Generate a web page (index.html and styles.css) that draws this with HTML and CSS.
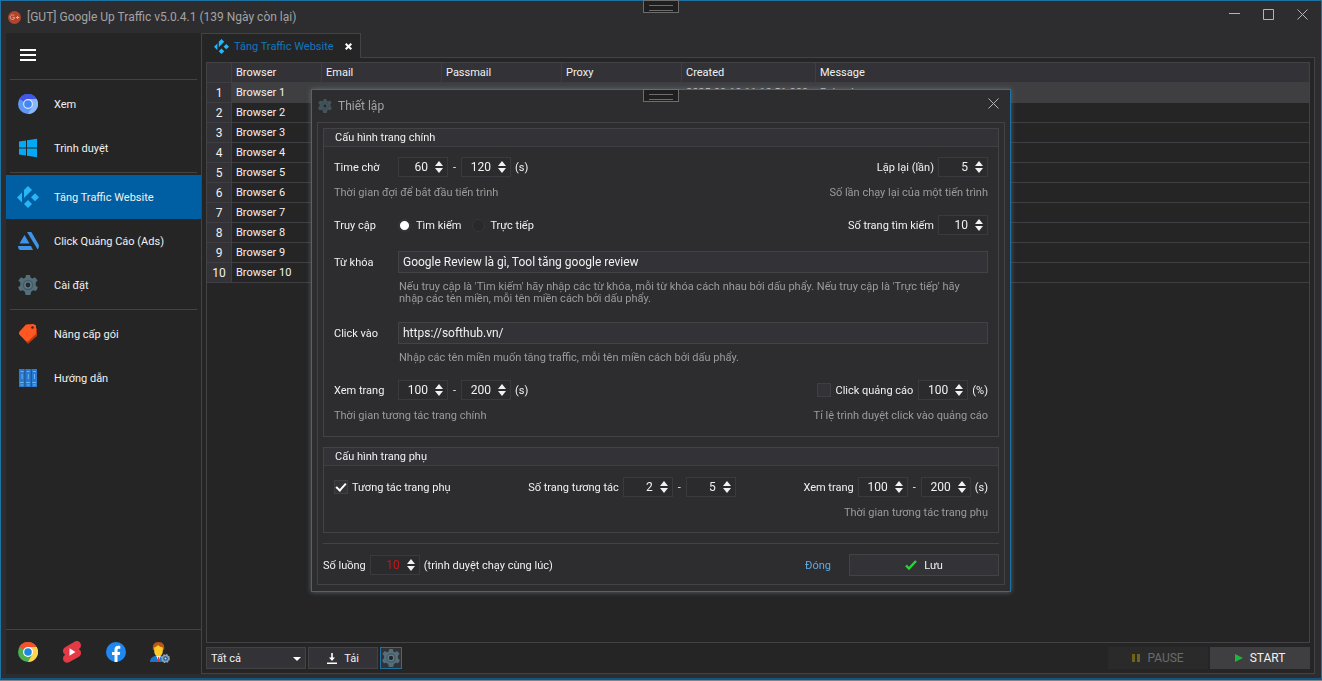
FILE: index.html
```html
<!DOCTYPE html>
<html lang="vi">
<head>
<meta charset="utf-8">
<title>[GUT] Google Up Traffic</title>
<link rel="stylesheet" href="styles.css">
</head>
<body>
<svg class="defs" aria-hidden="true">
  <defs>
    <symbol id="gear" viewBox="0 0 20 20">
      <path fill="#546e7a" d="M8 0h4l.6 2.700 1.900.9 2.500-1.300 2.600 3.200-1.900 2v2.900l2.200 2-1.900 3.500-2.900-.6-1.900 1.400L12.400 20H7.600l-.8-3.300-1.900-1.400-2.900.6L.1 12.400l2.200-2V7.500l-1.900-2L3 2.300l2.500 1.300 1.900-.9z"/>
      <circle cx="10" cy="10" r="5.200" fill="#455a64"/>
      <circle cx="10" cy="10" r="3.800" fill="#607d8b"/>
      <circle cx="10" cy="10" r="2.400" fill="#26292b"/>
    </symbol>
    <symbol id="kodi" viewBox="0 0 22 22">
      <path fill="#29b6f6" d="M11 0l4 4-8 8V4zM5 6.500v10L0 11.500zM18 7.200l4 4-4 4-4-4zM11 14l4 4-4 4-4-4z"/>
    </symbol>
    <symbol id="updown" viewBox="0 0 8 12">
      <path fill="#f1f1f1" d="M0 5l4-5 4 5zM0 7h8l-4 5z"/>
    </symbol>
  </defs>
</svg>

<div class="window">
  <div class="grip" aria-hidden="true"></div>
  <header class="titlebar">
    <svg class="app-icon" viewBox="0 0 13 13"><circle cx="6.500" cy="6.500" r="6.500" fill="#b5432a"/><path d="M6.200 4.700A2.300 2.300 0 1 0 6.700 6.700H4.600M8 6.500h3.200M9.600 4.900v3.200" fill="none" stroke="#d9b0a6" stroke-width="1"/></svg>
    <h1 class="title">[GUT] Google Up Traffic v5.0.4.1 (139 Ngày còn lại)</h1>
    <div class="win-buttons">
      <button class="win-button" aria-label="Minimize"><svg viewBox="0 0 11 11"><path d="M0 4.500h11"/></svg></button>
      <button class="win-button" aria-label="Maximize"><svg viewBox="0 0 11 11"><path d="M.5.5h10v10H.5z"/></svg></button>
      <button class="win-button" aria-label="Close"><svg viewBox="0 0 11 11"><path d="M.5.5l10 10M10.500.5l-10 10"/></svg></button>
    </div>
  </header>

  <div class="workspace">
    <nav class="sidebar">
      <button class="menu-button" aria-label="Menu"><svg viewBox="0 0 16 12"><path fill="#fff" d="M0 0h16v2H0zM0 5h16v2H0zM0 10h16v2H0z"/></svg></button>
      <hr class="nav-line">
      <a class="nav-item" href="#">
        <svg class="nav-icon" viewBox="0 0 20 20"><circle cx="10" cy="10" r="10" fill="#5e97f6"/><path d="M10 10L1.300 5A10 10 0 0 1 18.700 5z" fill="#4257e8"/><path d="M10 10l4.300 2.500L10 20A10 10 0 0 0 18.700 5H10z" fill="#8ab8fb"/><circle cx="10" cy="10" r="4.900" fill="#dce9fd"/><circle cx="10" cy="10" r="3.800" fill="#4285f4"/></svg>
        Xem</a>
      <a class="nav-item" href="#">
        <svg class="nav-icon" viewBox="0 0 20 20"><path fill="#03a9f4" d="M1 3.500l7-1v7H1zM9 2.300l10-1.500v8.700H9zM1 10.500h7v7l-7-1zM9 10.500h10v8.700L9 17.700z"/></svg>
        Trình duyệt</a>
      <hr class="nav-line">
      <a class="nav-item active" href="#">
        <svg class="nav-icon wide"><use href="#kodi"/></svg>
        Tăng Traffic Website</a>
      <a class="nav-item" href="#">
        <svg class="nav-icon wide" viewBox="0 0 22 20"><path fill="#3d94e8" d="M7.500 4l5 8.500h-10zM1 15h13l2 4H3.300c-1.300 0-2.300-2-2.300-4zM10 1h3.500c.8 0 1.200.5 1.600 1.200l6.500 11.300c.8 1.600.2 3.300-.9 5z"/></svg>
        Click Quảng Cáo (Ads)</a>
      <a class="nav-item" href="#">
        <svg class="nav-icon"><use href="#gear"/></svg>
        Cài đặt</a>
      <hr class="nav-line">
      <a class="nav-item" href="#">
        <svg class="nav-icon" viewBox="0 0 20 20"><path fill="#bf360c" d="M1 10l9 10 9-8V5L17 2z"/><path fill="#ff5722" d="M8 .5L15.500 0 18 1.500V10l-7.500 7c-1 .8-2 .6-3-.5L1.500 10.500c-.8-1-.6-2 .1-3z"/><circle cx="14.500" cy="3.500" r="1.300" fill="#3e2723"/></svg>
        Nâng cấp gói</a>
      <a class="nav-item" href="#">
        <svg class="nav-icon" viewBox="0 0 20 20"><path fill="#2979d0" d="M1 1h5.700v18H1zM7.200 1h5.700v18H7.200zM13.400 1h5.600v18h-5.600z"/><path fill="#64b5f6" d="M2.500 3h3v1h-3zM8.700 3h3v1h-3zM14.900 3h3v1h-3zM3.600 6h1v5h-1zM9.800 6h1v5h-1zM16 6h1v5h-1zM2 14h3.600v1H2zM8.200 14h3.600v1H8.200zM14.400 14H18v1h-3.600zM2.500 16.500h3v1h-3zM8.700 16.500h3v1h-3zM14.900 16.500h3v1h-3z"/></svg>
        Hướng dẫn</a>
      <div class="nav-footer">
        <a class="nav-link" href="#" aria-label="Chrome"><svg viewBox="0 0 20 20"><circle cx="10" cy="10" r="10" fill="#4caf50"/><path d="M10 10L1.300 5A10 10 0 0 1 18.700 5H10z" fill="#f4512c"/><path d="M10 10l4.300 2.500L10 20A10 10 0 0 0 18.700 5H10z" fill="#ffd54f"/><circle cx="10" cy="10" r="5" fill="#fff"/><circle cx="10" cy="10" r="3.800" fill="#1e88e5"/></svg></a>
        <a class="nav-link" href="#" aria-label="Shorts"><svg viewBox="1 0 18 22"><path fill="#e53945" d="M13 .5c3-1.300 6 .8 6 4 0 1.700-1 3-2.300 3.800 1.800.8 2.500 2.200 2.300 4-.1 1.700-1 3-2.500 3.800L7 21.300c-3 1.300-6-.6-6-3.800 0-1.700.9-3 2.300-3.800C1.700 13 .9 11.500 1 9.700c.1-1.700 1-3 2.500-3.800z"/><path fill="#fff" d="M7.500 7.300l6 3.700-6 3.700z"/></svg></a>
        <a class="nav-link" href="#" aria-label="Facebook"><svg viewBox="0 0 20 20"><circle cx="10" cy="10" r="10" fill="#1e88f0"/><path fill="#fff" d="M8.500 20v-7H6v-3h2.500V7.800c0-2.700 1.500-4 3.800-4 .8 0 1.500.1 2 .2v2.700h-1.200c-1.200 0-1.600.6-1.600 1.500V10h2.700l-.5 3h-2.200v7z"/></svg></a>
        <a class="nav-link" href="#" aria-label="Tài khoản"><svg viewBox="0 0 20 20"><path fill="#1976d2" d="M0 20c0-4 2.500-5.500 6-6.500h5c2 .5 3 1.500 4 2.500v4z"/><path fill="#fff" d="M6 13.500h5L8.500 19z"/><path fill="#e53935" d="M8 15h1.200l.6 5H7.500z"/><path fill="#b85a14" d="M3 8C2 3 4 0 8.500 0S15 3 14 8z"/><path fill="#ffca28" d="M4.200 5.500C6 5 7 4 8 3c1.500 1.500 3 2 4.800 2.500V9c0 3-2 5.500-4.300 5.500S4.200 12 4.200 9z"/><circle cx="15.500" cy="16.500" r="3.700" fill="#90a4ae" stroke="#90a4ae" stroke-width="1.500" stroke-dasharray="1.700 1.200"/><circle cx="15.500" cy="16.500" r="2.300" fill="#1e56a0"/><circle cx="15.500" cy="16.500" r="1" fill="#cfd8dc"/></svg></a>
      </div>
    </nav>

    <main class="main">
      <div class="tabs">
        <div class="tab">
          <svg class="tab-icon"><use href="#kodi"/></svg>
          <span>Tăng Traffic Website</span>
          <button class="tab-close" aria-label="Đóng tab"><svg viewBox="0 0 7 7"><path d="M.7.7l5.600 5.600M6.300.7L.7 6.300" stroke="#fff" stroke-width="2"/></svg></button>
        </div>
        <div class="tab-rest"></div>
      </div>
      <div class="page">
        <div class="grid">
          <table class="table">
            <colgroup><col class="c-num"><col class="c-browser"><col class="c-std"><col class="c-std"><col class="c-std"><col class="c-created"><col></colgroup>
            <thead><tr><th></th><th>Browser</th><th>Email</th><th>Passmail</th><th>Proxy</th><th>Created</th><th>Message</th></tr></thead>
            <tbody>
              <tr class="selected"><th>1</th><td>Browser 1</td><td></td><td></td><td></td><td>2025-09-10 11:10:51.009</td><td>Reload</td></tr>
              <tr><th>2</th><td>Browser 2</td><td></td><td></td><td></td><td></td><td></td></tr>
              <tr><th>3</th><td>Browser 3</td><td></td><td></td><td></td><td></td><td></td></tr>
              <tr><th>4</th><td>Browser 4</td><td></td><td></td><td></td><td></td><td></td></tr>
              <tr><th>5</th><td>Browser 5</td><td></td><td></td><td></td><td></td><td></td></tr>
              <tr><th>6</th><td>Browser 6</td><td></td><td></td><td></td><td></td><td></td></tr>
              <tr><th>7</th><td>Browser 7</td><td></td><td></td><td></td><td></td><td></td></tr>
              <tr><th>8</th><td>Browser 8</td><td></td><td></td><td></td><td></td><td></td></tr>
              <tr><th>9</th><td>Browser 9</td><td></td><td></td><td></td><td></td><td></td></tr>
              <tr><th>10</th><td>Browser 10</td><td></td><td></td><td></td><td></td><td></td></tr>
            </tbody>
          </table>
        </div>
        <div class="toolbar">
          <div class="select-box">
            <select class="select" aria-label="Bộ lọc"><option>Tất cả</option></select>
            <svg class="select-arrow" viewBox="0 0 8 4"><path fill="#fff" d="M0 0h8L4 4z"/></svg>
          </div>
          <button class="button load"><svg class="load-icon" viewBox="0 0 10 11"><path fill="#fff" d="M4.200 0h1.600v4.500H8L5 8 2 4.500h2.200zM0 9.500h10V11H0z"/></svg>Tải</button>
          <button class="gear-button" aria-label="Thiết lập"><svg><use href="#gear"/></svg></button>
          <span class="spacer"></span>
          <button class="button run pause" disabled><svg viewBox="0 0 8 8"><path fill="#6f6318" d="M0 0h3v8H0zM5 0h3v8H5z"/></svg>PAUSE</button>
          <button class="button run start"><svg viewBox="0 0 8 8"><path fill="#1fb53a" d="M0 0l8 4-8 4z"/></svg>START</button>
        </div>
      </div>
    </main>
  </div>
</div>

<div class="overlay">
  <section class="dialog" role="dialog" aria-labelledby="dialog-title">
    <div class="grip" aria-hidden="true"></div>
    <header class="dialog-head">
      <svg class="dialog-icon"><use href="#gear"/></svg>
      <h2 class="title" id="dialog-title">Thiết lập</h2>
      <button class="win-button" aria-label="Đóng"><svg viewBox="0 0 11 11"><path d="M.5.5l10 10M10.500.5l-10 10"/></svg></button>
    </header>
    <form class="panel">
      <fieldset class="group">
        <legend class="group-title">Cấu hình trang chính</legend>
        <div class="group-body">
          <div class="row">
            <label class="name" for="wait-from">Time chờ</label>
            <span class="spin"><input id="wait-from" type="number" value="60"><svg><use href="#updown"/></svg></span>
            <span class="dash">-</span>
            <span class="spin"><input aria-label="Time chờ đến" type="number" value="120"><svg><use href="#updown"/></svg></span>
            <span class="unit">(s)</span>
            <span class="spacer"></span>
            <label class="before" for="repeat">Lặp lại (lần)</label>
            <span class="spin"><input id="repeat" type="number" value="5"><svg><use href="#updown"/></svg></span>
          </div>
          <div class="row hints"><span>Thời gian đợi để bắt đầu tiến trình</span><span>Số lần chạy lại của một tiến trình</span></div>
          <div class="row">
            <span class="name">Truy cập</span>
            <label class="choice"><input type="radio" name="visit" checked>Tìm kiếm</label>
            <label class="choice"><input type="radio" name="visit">Trực tiếp</label>
            <span class="spacer"></span>
            <label class="before" for="pages">Số trang tìm kiếm</label>
            <span class="spin"><input id="pages" type="number" value="10"><svg><use href="#updown"/></svg></span>
          </div>
          <div class="row text-row">
            <label class="name" for="keywords">Từ khóa</label>
            <input class="text" id="keywords" type="text" value="Google Review là gì, Tool tăng google review">
          </div>
          <p class="note two-lines">Nếu truy cập là 'Tìm kiếm' hãy nhập các từ khóa, mỗi từ khóa cách nhau bởi dấu phẩy. Nếu truy cập là 'Trực tiếp' hãy nhập các tên miền, mỗi tên miền cách bởi dấu phẩy.</p>
          <div class="row text-row">
            <label class="name" for="click-on">Click vào</label>
            <input class="text" id="click-on" type="text" value="https://softhub.vn/">
          </div>
          <p class="note">Nhập các tên miền muốn tăng traffic, mỗi tên miền cách bởi dấu phẩy.</p>
          <div class="row">
            <label class="name" for="view-from">Xem trang</label>
            <span class="spin"><input id="view-from" type="number" value="100"><svg><use href="#updown"/></svg></span>
            <span class="dash">-</span>
            <span class="spin"><input aria-label="Xem trang đến" type="number" value="200"><svg><use href="#updown"/></svg></span>
            <span class="unit">(s)</span>
            <span class="spacer"></span>
            <label class="check"><input type="checkbox">Click quảng cáo</label>
            <span class="spin"><input aria-label="Tỉ lệ click quảng cáo" type="number" value="100"><svg><use href="#updown"/></svg></span>
            <span class="unit">(%)</span>
          </div>
          <div class="row hints last"><span>Thời gian tương tác trang chính</span><span>Tỉ lệ trình duyệt click vào quảng cáo</span></div>
        </div>
      </fieldset>

      <fieldset class="group">
        <legend class="group-title">Cấu hình trang phụ</legend>
        <div class="group-body compact">
          <div class="row spread">
            <label class="check"><input type="checkbox" checked>Tương tác trang phụ</label>
            <span class="cluster">
              <label class="before" for="sub-from">Số trang tương tác</label>
              <span class="spin"><input id="sub-from" type="number" value="2"><svg><use href="#updown"/></svg></span>
              <span class="dash">-</span>
              <span class="spin"><input aria-label="Số trang đến" type="number" value="5"><svg><use href="#updown"/></svg></span>
            </span>
            <span class="cluster">
              <label class="before" for="subview-from">Xem trang</label>
              <span class="spin"><input id="subview-from" type="number" value="100"><svg><use href="#updown"/></svg></span>
              <span class="dash">-</span>
              <span class="spin"><input aria-label="Xem trang phụ đến" type="number" value="200"><svg><use href="#updown"/></svg></span>
              <span class="unit">(s)</span>
            </span>
          </div>
          <div class="row hints last"><span></span><span>Thời gian tương tác trang phụ</span></div>
        </div>
      </fieldset>

      <div class="actions">
        <label class="before" for="threads">Số luồng</label>
        <span class="spin danger"><input id="threads" type="number" value="10"><svg><use href="#updown"/></svg></span>
        <span class="unit">(trình duyệt chạy cùng lúc)</span>
        <span class="spacer"></span>
        <a class="close-link" href="#">Đóng</a>
        <button class="button save" type="button"><svg viewBox="0 0 12 10"><path d="M1 5.500l3 3L11 1" fill="none" stroke="#1fdc2c" stroke-width="2.400"/></svg>Lưu</button>
      </div>
    </form>
  </section>
</div>
</body>
</html>
```
FILE: styles.css
```css
* { box-sizing: border-box; }

body {
  margin: 0;
  min-height: 100vh;
  display: flex;
  padding-bottom: 1px;
  background: #7d868b;
  color: #f1f1f1;
  font: 11px/17px Roboto, "Noto Sans", sans-serif;
}

button, input, select { font: inherit; color: inherit; }
button { padding: 0; cursor: pointer; }
a { color: inherit; text-decoration: none; }
svg { display: block; flex: none; }
.defs { position: absolute; width: 0; height: 0; }
.spacer { flex: 1; }

/* Window frame */
.window {
  position: relative;
  flex: 1;
  display: flex;
  flex-direction: column;
  background: #2d2d30;
  border: 1px solid #1e73a3;
  border-bottom: 2px solid #12557f;
}
.grip {
  position: absolute;
  top: -1px;
  left: calc(50% - 18px);
  width: 36px;
  height: 13px;
  background: #1f1f1f;
  border: 1px solid #6d6d6d;
}
.grip::after {
  content: "";
  display: block;
  margin: 4px 5px;
  height: 4px;
  border: solid #6d6d6d;
  border-width: 1px 0;
}
.titlebar {
  display: flex;
  align-items: center;
  height: 32px;
  padding: 0 13px 0 7px;
}
.app-icon { width: 13px; height: 13px; }
.title {
  flex: 1;
  margin: 0 0 0 6px;
  font-size: 12px;
  font-weight: 400;
  line-height: 16px;
  color: #a3a3a3;
}
.win-buttons { display: flex; gap: 23px; padding-bottom: 6px; }
.win-button { background: none; border: 0; }
.win-button svg { width: 11px; height: 11px; fill: none; stroke: #b4b4b4; }

.workspace { flex: 1; display: flex; padding: 0 6px 4px 5px; }

/* Sidebar */
.sidebar {
  flex: none;
  display: flex;
  flex-direction: column;
  width: 195px;
  background: #252526;
}
.menu-button { align-self: flex-start; height: 44px; padding: 0 14px; background: none; border: 0; }
.menu-button svg { width: 16px; height: 12px; }
.nav-line { width: auto; height: 1px; margin: 2px 4px; border: 0; background: #434346; }
.nav-item { display: flex; align-items: center; height: 44px; padding-left: 12px; gap: 16px; }
.nav-item.active { background: #005fa3; }
.nav-icon { width: 20px; height: 20px; }
.nav-icon.wide { width: 22px; height: 22px; margin: 0 -1px; }
.nav-footer {
  display: flex;
  gap: 24px;
  margin-top: auto;
  padding: 11px 12px;
  border-top: 1px solid #434346;
}
.nav-link svg { width: 20px; height: 22px; }

/* Tabs and page */
.main { flex: 1; min-width: 0; display: flex; flex-direction: column; }
.tabs { display: flex; }
.tab {
  display: flex;
  align-items: center;
  height: 25px;
  padding: 0 8px 0 12px;
  background: #252526;
  border: 1px solid #434346;
  border-bottom: 0;
  color: #1277bd;
}
.tab-icon { width: 15px; height: 15px; margin-right: 5px; }
.tab-close { margin-left: 11px; background: none; border: 0; }
.tab-close svg { width: 7px; height: 7px; }
.tab-rest { flex: 1; border-bottom: 1px solid #434346; }
.page {
  flex: 1;
  display: flex;
  flex-direction: column;
  padding: 4px;
  background: #252526;
  border: 1px solid #434346;
  border-top: 0;
}
.grid { flex: 1; border: 1px solid #434346; overflow: hidden; }
.table { width: 100%; table-layout: fixed; border-collapse: separate; border-spacing: 0; }
.c-num { width: 25px; }
.c-browser { width: 90px; }
.c-std { width: 120px; }
.c-created { width: 134px; }
.table th, .table td {
  height: 20px;
  padding: 0 4px;
  line-height: 19px;
  font-weight: 400;
  text-align: left;
  white-space: nowrap;
  border-bottom: 1px solid #3f3f43;
}
.table thead th { background: #333337; border-right: 1px solid #3f3f43; }
.table thead th:last-child { border-right: 0; }
.table tbody th {
  padding: 0;
  font-size: 12px;
  line-height: 18px;
  text-align: center;
  background: #333337;
  border-right: 1px solid #3f3f43;
}
.selected td { background: #3f3f41; }

.toolbar { display: flex; gap: 2px; padding-top: 4px; }
.button {
  display: flex;
  align-items: center;
  justify-content: center;
  height: 22px;
  gap: 7px;
  background: #333337;
  border: 1px solid #434346;
}
.select-box { position: relative; width: 100px; }
.select {
  width: 100%;
  height: 22px;
  padding: 0 4px;
  appearance: none;
  background: #333337;
  border: 1px solid #434346;
  border-radius: 0;
}
.select-arrow { position: absolute; right: 5px; top: 10px; width: 8px; height: 4px; pointer-events: none; }
.load { width: 70px; }
.load-icon { width: 10px; height: 11px; }
.gear-button { padding: 1px; background: #333337; border: 1px solid #1e73a3; }
.gear-button svg { width: 18px; height: 18px; }
.run { width: 100px; font-size: 12px; }
.run svg { width: 8px; height: 8px; }
.pause { color: #6b6b6b; background: #2a2a2b; border-color: #2a2a2b; }
.start { background: #3f3f41; border-color: #3f3f41; }

/* Settings dialog */
.overlay {
  position: fixed;
  inset: 0;
  display: flex;
  align-items: center;
  justify-content: center;
}
.dialog {
  position: relative;
  width: 700px;
  padding: 0 5px 6px;
  background: #2d2d30;
  border: 1px solid #1e73a3;
  box-shadow: 0 0 5px #5c6469;
}
.dialog-head { display: flex; align-items: center; height: 32px; padding: 0 6px 0 1px; }
.dialog-icon { width: 14px; height: 14px; opacity: 0.6; }
.dialog-head .win-button { padding-bottom: 6px; }
.panel { padding: 5px 5px 8px; border: 1px solid #434346; }

.group { min-width: 0; margin: 0 0 10px; padding: 0; border: 1px solid #434346; }
.group-title {
  float: left;
  width: 100%;
  height: 18px;
  padding: 0 11px;
  line-height: 17px;
  background: #333337;
  border-bottom: 1px solid #3f3f43;
}
.group-body { clear: both; padding: 10px 10px 0; }
.row { display: flex; align-items: center; height: 20px; }
.row.hints { justify-content: space-between; height: 16px; margin: 7px 0 15px; color: #9b9b9b; }
.row.hints.last { margin-bottom: 13px; }
.group-body.compact { padding-top: 11px; }
.compact .row.hints.last { margin-bottom: 12px; }
.row.text-row { height: 22px; margin-top: 16px; }
.row.spread { justify-content: space-between; }
.row.spread .check { margin-right: 10px; }
.cluster { display: flex; align-items: center; }
.name { width: 64px; }
.before { margin-right: 4px; }
.unit { margin-left: 4px; }
.dash { width: 13px; text-align: center; }

.spin {
  display: flex;
  align-items: center;
  width: 50px;
  height: 20px;
  padding-right: 4px;
  background: #2b2b2e;
  border: 1px solid #3a3a3e;
  font-size: 12px;
}
.spin input {
  flex: 1;
  min-width: 0;
  padding: 0;
  text-align: right;
  background: none;
  border: 0;
  appearance: textfield;
}
.spin input::-webkit-inner-spin-button { display: none; }
.spin svg { width: 8px; height: 12px; margin-left: 7px; }
.danger input { color: #c01818; }

.text {
  flex: 1;
  height: 22px;
  padding: 0 4px;
  font-size: 12px;
  background: #333337;
  border: 1px solid #434346;
}
.note { margin: 8px 0 16px; padding: 0 10px 0 65px; line-height: 12px; color: #9b9b9b; }
.note.two-lines { margin-bottom: 17px; }

.choice { display: flex; align-items: center; margin-right: 11px; gap: 5px; }
.choice input {
  appearance: none;
  width: 13px;
  height: 13px;
  margin: 0;
  border: 1px solid #38383c;
  border-radius: 50%;
  background: #29292b;
}
.choice input:checked { background: radial-gradient(circle, #fff 4px, #333337 5px); }
.check { display: flex; align-items: center; gap: 4px; margin-right: 5px; }
.check input {
  appearance: none;
  display: grid;
  place-items: center;
  width: 14px;
  height: 14px;
  margin: 0;
  background: #333337;
  border: 1px solid #3f3f43;
}
.check input:checked::after {
  content: "";
  width: 4px;
  height: 8px;
  margin-bottom: 2px;
  border: solid #fff;
  border-width: 0 2px 2px 0;
  transform: rotate(42deg);
}

.actions { display: flex; align-items: center; padding-top: 10px; border-top: 1px solid #434346; }
.close-link { margin-right: 18px; color: #5ea8e0; }
.save { width: 150px; }
.save svg { width: 12px; height: 10px; }
```
